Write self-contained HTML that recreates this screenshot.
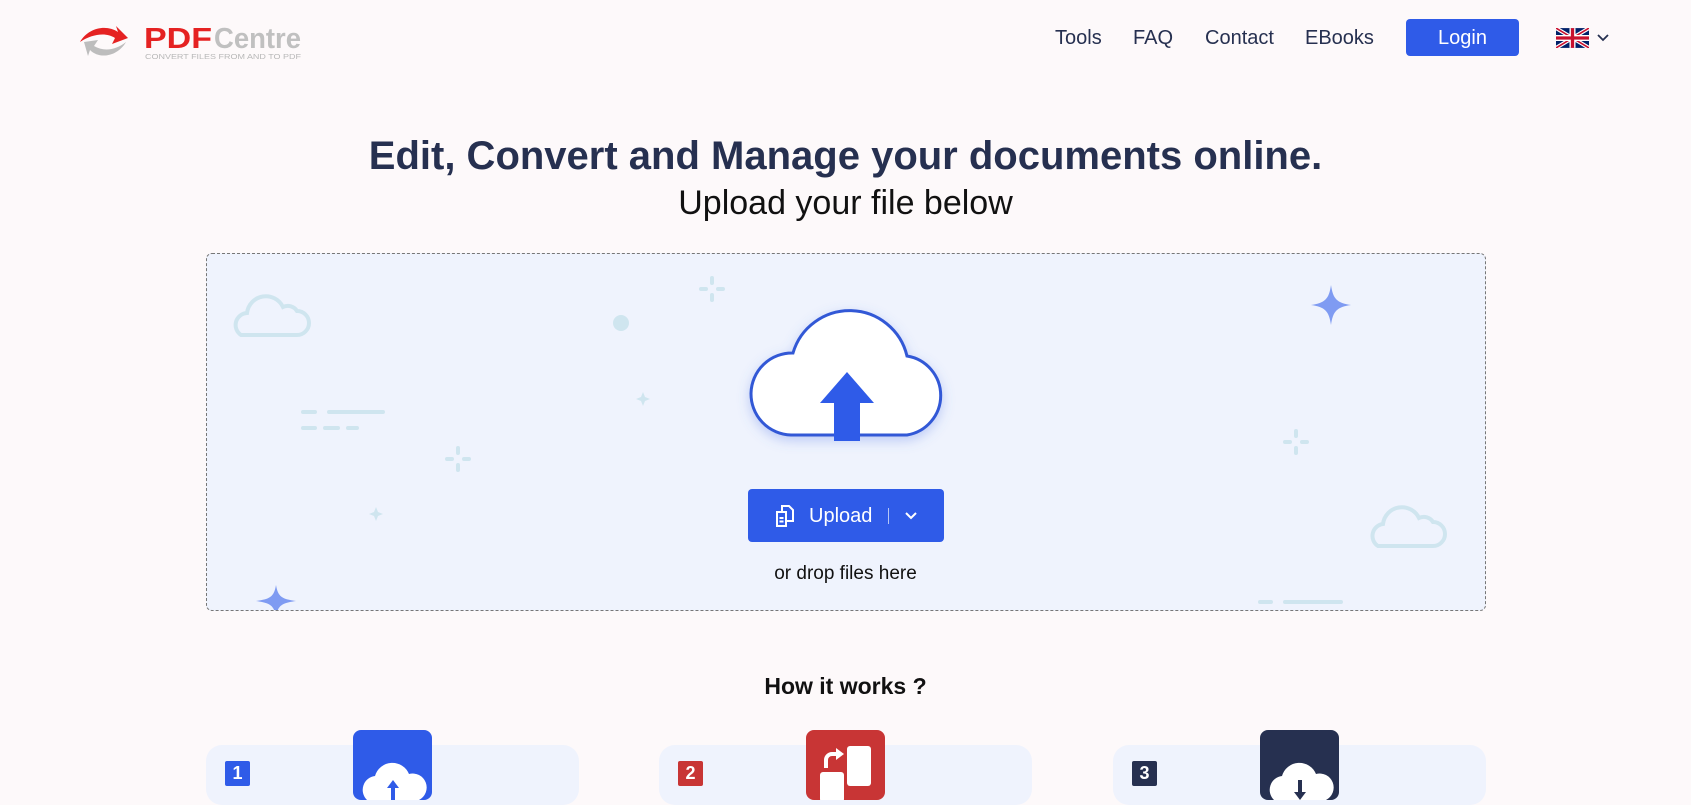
<!DOCTYPE html>
<html><head><meta charset="utf-8">
<style>
*{margin:0;padding:0;box-sizing:border-box}
body{width:1691px;height:790px;overflow:hidden;background:#fdf9fa;font-family:"Liberation Sans",Arial,sans-serif;position:relative;color:#263050}
.a{position:absolute}
.nav a{position:absolute;top:27px;font-size:20px;color:#263050;text-decoration:none}
</style></head><body>
<svg class="a" style="left:78px;top:16px" width="230" height="46" viewBox="0 0 230 46">
<path d="M2 26 C10 12 28 8 40 16 L38 10 L50 22 L34 28 L37 22 C28 16 14 18 2 26Z" fill="#e52222"/>
<path d="M48 26 C40 40 22 44 12 34 L10 40 L6 26 L20 24 L16 30 C26 36 38 34 48 26Z" fill="#bdbdbd"/>
<text x="66" y="32" font-family="Liberation Sans" font-weight="bold" font-size="29" fill="#e52222" textLength="68" lengthAdjust="spacingAndGlyphs">PDF</text>
<text x="136" y="32" font-family="Liberation Sans" font-weight="bold" font-size="29" fill="#c0c0c0" textLength="87" lengthAdjust="spacingAndGlyphs">Centre</text>
<text x="67" y="43" font-family="Liberation Sans" font-size="7.2" fill="#b8b8b8" textLength="156" lengthAdjust="spacingAndGlyphs">CONVERT FILES FROM AND TO PDF</text>
</svg>
<div class="nav">
<a style="left:1055px">Tools</a><a style="left:1133px">FAQ</a><a style="left:1205px">Contact</a><a style="left:1305px">EBooks</a>
</div>
<div class="a" style="left:1406px;top:19px;width:113px;height:37px;background:#2f5be8;border-radius:4px;color:#fff;font-size:20px;text-align:center;line-height:38px">Login</div>
<svg class="a" style="left:1556px;top:28px" width="33" height="20" viewBox="0 0 60 36">
<rect width="60" height="36" fill="#012169"/>
<path d="M0 0L60 36M60 0L0 36" stroke="#fff" stroke-width="7"/>
<path d="M0 0L60 36M60 0L0 36" stroke="#c8102e" stroke-width="3"/>
<path d="M30 0V36M0 18H60" stroke="#fff" stroke-width="11"/>
<path d="M30 0V36M0 18H60" stroke="#c8102e" stroke-width="6"/>
</svg>
<svg class="a" style="left:1596px;top:33px" width="14" height="10"><path d="M2 2L7 7L12 2" stroke="#263050" stroke-width="1.8" fill="none"/></svg>

<div class="a" style="left:0;width:1691px;top:134px;text-align:center;font-size:40px;font-weight:bold;color:#263050">Edit, Convert and Manage your documents online.</div>
<div class="a" style="left:0;width:1691px;top:184px;text-align:center;font-size:34px;color:#111">Upload your file below</div>

<div class="a" style="left:206px;top:253px;width:1280px;height:358px;background:#eff3fd;border:1px dashed #777;border-radius:6px;overflow:hidden">
<svg class="a" style="left:-206px;top:-253px" width="1691" height="790">
<g fill="none" stroke="#cfe5ef" stroke-width="4" stroke-linecap="round">
<path d="M240 334 H296 A12 12 0 0 0 296 310 A11 11 0 0 0 282 306 A19 19 0 0 0 246 312 A12 12 0 0 0 240 334Z"/>
<path d="M1377 545 H1432 A12 12 0 0 0 1432 521 A11 11 0 0 0 1418 517 A19 19 0 0 0 1382 523 A12 12 0 0 0 1377 545Z"/>
<path d="M302 411H314M328 411H382M302 427H314M324 427H337M347 427H356"/>
<path d="M1259 601H1270M1284 601H1340"/>
<path d="M457 447V452M457 464V469M446 458H451M463 458H468"/>
<path d="M711 277V282M711 294V299M700 288H705M717 288H722"/>
<path d="M1295 430V435M1295 447V452M1284 441H1289M1301 441H1306"/>
</g>
<circle cx="620" cy="322" r="8" fill="#cfe5ef"/>
<path d="M642 391L644 396L649 398L644 400L642 405L640 400L635 398L640 396Z" fill="#cfe5ef"/>
<path d="M375 506L377 511L382 513L377 515L375 520L373 515L368 513L373 511Z" fill="#cfe5ef"/>
<path d="M1330 284C1332 298 1336 302 1350 304C1336 306 1332 310 1330 324C1328 310 1324 306 1310 304C1324 302 1328 298 1330 284Z" fill="#7f9bf2"/>
<path d="M275 584C277 596 281 598 295 600C281 602 277 604 275 616C273 604 269 602 255 600C269 598 273 596 275 584Z" fill="#7f9bf2"/>
<defs><filter id="sh" x="-20%" y="-20%" width="140%" height="140%"><feDropShadow dx="0" dy="4" stdDeviation="6" flood-color="#5b7be8" flood-opacity=".35"/></filter></defs>
<path d="M790 434 H906 A40 40 0 0 0 906 355 A59 59 0 0 0 792 352 A41 41 0 0 0 790 434Z" fill="#fff" stroke="#3158d6" stroke-width="3" filter="url(#sh)"/>
<path d="M846 371L873 402H859V440H833V402H819Z" fill="#2f5be8"/>
</svg>
</div>
<div class="a" style="left:748px;top:489px;width:196px;height:53px;background:#2f5be8;border-radius:4px;color:#fff">
<svg class="a" style="left:26px;top:15px" width="22" height="24" viewBox="0 0 22 24" fill="none" stroke="#fff" stroke-width="2"><path d="M3 8h9v14H3zM8 7V2h7l4 4v11h-6"/><path d="M5.5 14h4M5.5 17.5h4"/></svg>
<span class="a" style="left:61px;top:16px;font-size:20px">Upload</span>
<div class="a" style="left:140px;top:19px;width:1px;height:16px;background:#b6c6f6"></div>
<svg class="a" style="left:156px;top:22px" width="14" height="10"><path d="M2 2L7 7L12 2" stroke="#fff" stroke-width="2" fill="none"/></svg>
</div>
<div class="a" style="left:0;width:1691px;top:563px;text-align:center;font-size:19px;color:#111">or drop files here</div>

<div class="a" style="left:0;width:1691px;top:673px;text-align:center;font-size:23px;font-weight:bold;color:#111">How it works ?</div>

<div class="a" style="left:206px;top:745px;width:373px;height:60px;background:#eff3fd;border-radius:16px"></div>
<div class="a" style="left:659px;top:745px;width:373px;height:60px;background:#eff3fd;border-radius:16px"></div>
<div class="a" style="left:1113px;top:745px;width:373px;height:60px;background:#eff3fd;border-radius:16px"></div>
<div class="a" style="left:225px;top:761px;width:25px;height:25px;background:#2f5be8;color:#fff;font-weight:bold;font-size:18px;text-align:center;line-height:25px;border-radius:2px">1</div>
<div class="a" style="left:678px;top:761px;width:25px;height:25px;background:#c83535;color:#fff;font-weight:bold;font-size:18px;text-align:center;line-height:25px;border-radius:2px">2</div>
<div class="a" style="left:1132px;top:761px;width:25px;height:25px;background:#263050;color:#fff;font-weight:bold;font-size:18px;text-align:center;line-height:25px;border-radius:2px">3</div>
<div class="a" style="left:353px;top:730px;width:79px;height:70px;background:#2f5be8;border-radius:8px;overflow:hidden">
<svg width="79" height="70"><path d="M14 70 A14 14 0 0 1 22 46 A18 18 0 0 1 56 44 A14 14 0 0 1 66 70Z" fill="#fff"/><path d="M40 50L46 58H42V70H38V58H34Z" fill="#2f5be8"/></svg></div>
<div class="a" style="left:806px;top:730px;width:79px;height:70px;background:#c83535;border-radius:8px;overflow:hidden">
<svg width="79" height="70"><rect x="41" y="16" width="24" height="40" rx="3" fill="#fff"/><rect x="14" y="42" width="24" height="30" rx="3" fill="#fff"/><path d="M20 38V30a6 6 0 0 1 6-6h6" stroke="#fff" stroke-width="4" fill="none"/><path d="M30 18L38 24L30 30Z" fill="#fff"/></svg></div>
<div class="a" style="left:1260px;top:730px;width:79px;height:70px;background:#263050;border-radius:8px;overflow:hidden">
<svg width="79" height="70"><path d="M14 70 A14 14 0 0 1 22 46 A18 18 0 0 1 56 44 A14 14 0 0 1 66 70Z" fill="#fff"/><path d="M38 50H42V62H46L40 70L34 62H38Z" fill="#263050"/></svg></div>
</body></html>
